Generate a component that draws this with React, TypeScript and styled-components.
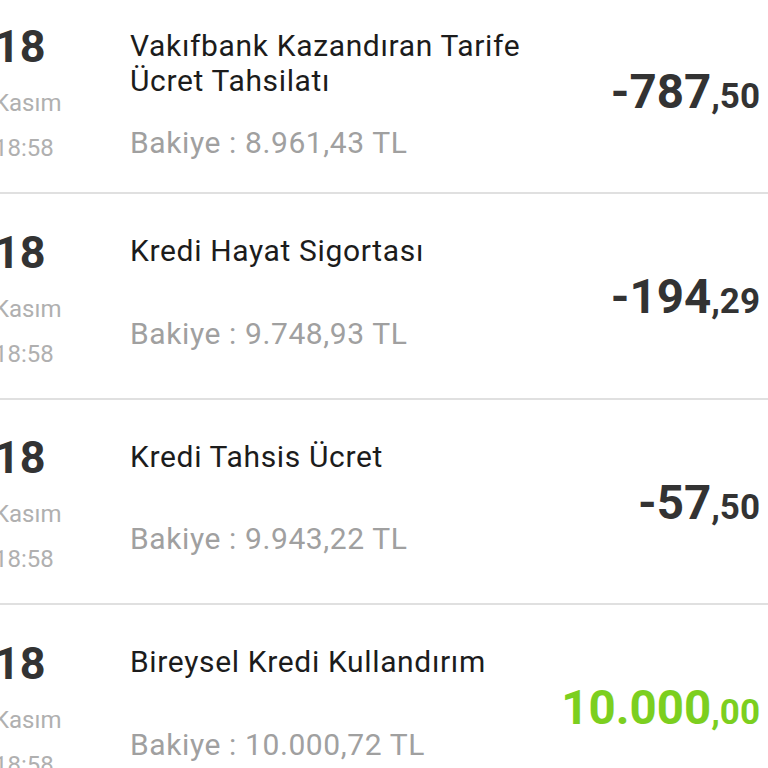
import React from "react";
import styled, { createGlobalStyle } from "styled-components";

const Global = createGlobalStyle`
  html, body { margin: 0; padding: 0; background: #ffffff; overflow: hidden; }
  body { font-family: Roboto, "Liberation Sans", sans-serif; }
`;

const List = styled.div`
  margin-top: -11.5px;
  margin-left: -6px;
  width: calc(100% + 6px);
`;

const Row = styled.div`
  box-sizing: border-box;
  height: 205.5px;
  border-bottom: 2px solid #e0e0e0;
  display: grid;
  grid-template-columns: 136px 1fr auto;
  align-items: start;
  padding-right: 8px;
`;

const DateCol = styled.div`
  display: flex;
  flex-direction: column;
  padding-top: 35.6px;
`;

const Day = styled.div`
  font-size: 45px;
  line-height: 45px;
  font-weight: 700;
  color: #333333;
  margin-bottom: 12px;
`;

const DateSub = styled.div`
  font-size: 24px;
  line-height: 45px;
  color: #b0b0b0;
`;

const Middle = styled.div`
  display: flex;
  flex-direction: column;
  padding-top: 39px;
`;

const Title = styled.div`
  font-size: 30px;
  line-height: 35px;
  letter-spacing: 0.65px;
  color: #1c1c1c;
  min-height: 55px;
  margin-bottom: 27.7px;
`;

const Balance = styled.div`
  font-size: 30px;
  line-height: 35px;
  letter-spacing: 0.6px;
  color: #a0a0a0;
`;

const Amount = styled.div<{ $positive?: boolean }>`
  padding-top: 79px;
  font-weight: 700;
  font-size: 47.5px;
  line-height: 48px;
  white-space: nowrap;
  color: ${(p) => (p.$positive ? "#7ccf1f" : "#333333")};
`;

const Cents = styled.span`
  font-size: 35px;
`;

type Tx = { title: string[]; balance: string; whole: string; cents: string; positive?: boolean };

const txs: Tx[] = [
  { title: ["Vakıfbank Kazandıran Tarife", "Ücret Tahsilatı"], balance: "Bakiye : 8.961,43 TL", whole: "-787", cents: ",50" },
  { title: ["Kredi Hayat Sigortası"], balance: "Bakiye : 9.748,93 TL", whole: "-194", cents: ",29" },
  { title: ["Kredi Tahsis Ücret"], balance: "Bakiye : 9.943,22 TL", whole: "-57", cents: ",50" },
  { title: ["Bireysel Kredi Kullandırım"], balance: "Bakiye : 10.000,72 TL", whole: "10.000", cents: ",00", positive: true },
];

export default function App() {
  return (
    <>
      <Global />
      <List>
        {txs.map((t, i) => (
          <Row key={i}>
            <DateCol>
              <Day>18</Day>
              <DateSub>Kasım</DateSub>
              <DateSub>18:58</DateSub>
            </DateCol>
            <Middle>
              <Title>
                {t.title.map((l, j) => (
                  <div key={j}>{l}</div>
                ))}
              </Title>
              <Balance>{t.balance}</Balance>
            </Middle>
            <Amount $positive={t.positive}>
              {t.whole}
              <Cents>{t.cents}</Cents>
            </Amount>
          </Row>
        ))}
      </List>
    </>
  );
}
